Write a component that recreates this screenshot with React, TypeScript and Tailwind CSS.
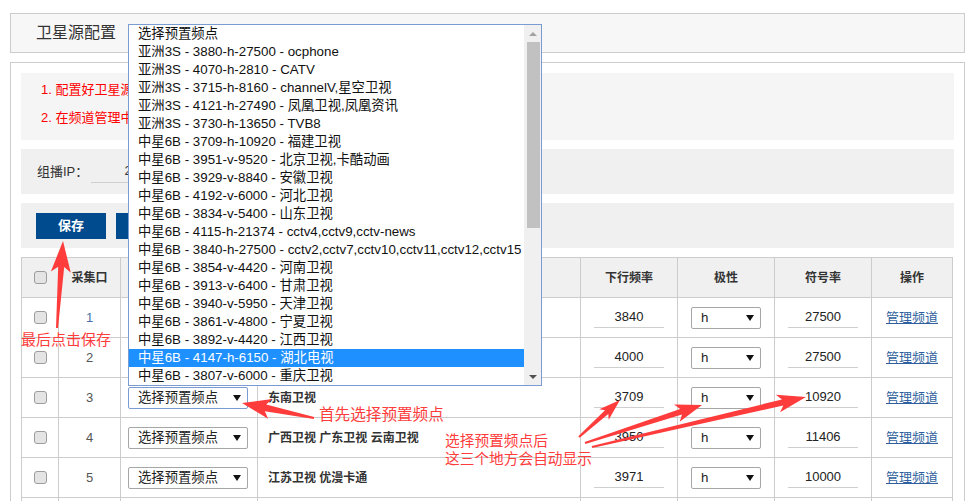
import React from "react";

// preset frequency list shown in the open select popup
const presets: string[] = [
  "选择预置频点",
  "亚洲3S - 3880-h-27500 - ocphone",
  "亚洲3S - 4070-h-2810 - CATV",
  "亚洲3S - 3715-h-8160 - channelV,星空卫视",
  "亚洲3S - 4121-h-27490 - 凤凰卫视,凤凰资讯",
  "亚洲3S - 3730-h-13650 - TVB8",
  "中星6B - 3709-h-10920 - 福建卫视",
  "中星6B - 3951-v-9520 - 北京卫视,卡酷动画",
  "中星6B - 3929-v-8840 - 安徽卫视",
  "中星6B - 4192-v-6000 - 河北卫视",
  "中星6B - 3834-v-5400 - 山东卫视",
  "中星6B - 4115-h-21374 - cctv4,cctv9,cctv-news",
  "中星6B - 3840-h-27500 - cctv2,cctv7,cctv10,cctv11,cctv12,cctv15",
  "中星6B - 3854-v-4420 - 河南卫视",
  "中星6B - 3913-v-6400 - 甘肃卫视",
  "中星6B - 3940-v-5950 - 天津卫视",
  "中星6B - 3861-v-4800 - 宁夏卫视",
  "中星6B - 3892-v-4420 - 江西卫视",
  "中星6B - 4147-h-6150 - 湖北电视",
  "中星6B - 3807-v-6000 - 重庆卫视",
];
const selectedPreset = 18;

interface Row {
  port: number;
  name: string;
  freq: string;
  pol: string;
  sym: string;
}

// rows 1-2 sit under the open popup, so their names are not shown
const rows: Row[] = [
  { port: 1, name: "", freq: "3840", pol: "h", sym: "27500" },
  { port: 2, name: "", freq: "4000", pol: "h", sym: "27500" },
  { port: 3, name: "东南卫视", freq: "3709", pol: "h", sym: "10920" },
  { port: 4, name: "广西卫视 广东卫视 云南卫视", freq: "3950", pol: "h", sym: "11406" },
  { port: 5, name: "江苏卫视 优漫卡通", freq: "3971", pol: "h", sym: "10000" },
];

const annotationRed = "#ff3c3c";

function Caret() {
  return (
    <svg width="8" height="6" viewBox="0 0 8 6" className="shrink-0">
      <polygon points="0,0 8,0 4,6" fill="#111" />
    </svg>
  );
}

function CheckBox() {
  return <div className="w-[13px] h-[13px] rounded-[3px] border border-[#9c9c9c] bg-[#e4e4e4]" />;
}

function FakeSelect({ value, width, focused }: { value: string; width: string; focused?: boolean }) {
  return (
    <div
      className={`${width} h-[22px] flex items-center justify-between pl-[9px] pr-[6px] rounded-[2px] border bg-white text-[13.33px] leading-[20px] text-[#222] ${
        focused ? "border-[#7b9bd3]" : "border-[#a6a6a6]"
      }`}
    >
      <span>{value}</span>
      <Caret />
    </div>
  );
}

function UnderlineInput({ value, width }: { value: string; width: string }) {
  return (
    <div className={`${width} h-[20px] border-b border-[#cfcfcf] text-center text-[13px] leading-[18px] text-[#222]`}>
      {value}
    </div>
  );
}

// red annotation arrow: tapered shaft with a swallow-tail head
function arrowPoints(
  x1: number, y1: number, x2: number, y2: number,
  tailW: number, shaftW: number, headL: number, headW: number
) {
  const len = Math.hypot(x2 - x1, y2 - y1);
  const ux = (x2 - x1) / len;
  const uy = (y2 - y1) / len;
  const nx = -uy;
  const ny = ux;
  const bx = x2 - ux * headL;
  const by = y2 - uy * headL;
  const back = headL * 0.2;
  const pts = [
    [x1 + (nx * tailW) / 2, y1 + (ny * tailW) / 2],
    [bx + (nx * shaftW) / 2, by + (ny * shaftW) / 2],
    [bx - ux * back + (nx * headW) / 2, by - uy * back + (ny * headW) / 2],
    [x2, y2],
    [bx - ux * back - (nx * headW) / 2, by - uy * back - (ny * headW) / 2],
    [bx - (nx * shaftW) / 2, by - (ny * shaftW) / 2],
    [x1 - (nx * tailW) / 2, y1 - (ny * tailW) / 2],
  ];
  return pts.map((p) => `${p[0].toFixed(1)},${p[1].toFixed(1)}`).join(" ");
}

const arrows: number[][] = [
  [57, 328, 63, 241, 2, 6, 26, 20],
  [314, 418, 242, 403, 2, 7, 24, 20],
  [579, 437, 620, 400, 2, 5, 18, 14],
  [585, 443, 702, 405, 2, 6, 22, 18],
  [592, 447, 806, 397, 2, 6, 24, 18],
];

const cols = ["w-[37px]", "w-[62px]", "w-[137px]", "w-[323px]", "w-[97px]", "w-[97px]", "w-[97px]", "w-[81px]"];

export default function App() {
  return (
    <div className="relative w-[966px] h-[501px] overflow-hidden bg-white pt-[13px] font-['Liberation_Sans','Noto_Sans_CJK_SC',sans-serif] text-[#333]">
      {/* title bar */}
      <div className="ml-[10px] w-[955px] h-[40px] border border-[#cccccc] bg-[#f7f7f7] flex items-center pl-[25px]">
        <span className="text-[16px] leading-[20px] text-[#333]">卫星源配置</span>
      </div>

      {/* main panel */}
      <div className="ml-[10px] mt-[9px] w-[955px] border border-[#cccccc] p-[10px] pb-[40px]">
        {/* notes */}
        <div className="h-[67px] bg-[#f5f5f5] pl-[20px] pt-[3px] text-[13px] leading-[28px] text-[#ff0000]">
          <div>1. 配置好卫星源的各项参数</div>
          <div>2. 在频道管理中选择需要的频道</div>
        </div>

        {/* multicast ip */}
        <div className="mt-[9px] h-[45px] bg-[#f0f0f0] flex items-center pl-[16px]">
          <span className="text-[13px] leading-[20px] text-[#333] w-[54px]">组播IP：</span>
          <div className="w-[150px] h-[22px] border-b border-[#cfcfcf] text-center text-[13px] leading-[20px] text-[#333]">
            239.255.10.10
          </div>
        </div>

        {/* buttons */}
        <div className="mt-[9px] h-[45px] bg-[#f0f0f0] flex items-center gap-[10px] pl-[15px]">
          <button className="w-[70px] h-[26px] bg-[#004a8e] text-white text-[13px] font-bold leading-[20px]">保存</button>
          <button className="w-[70px] h-[26px] bg-[#004a8e] text-white text-[13px] font-bold leading-[20px]">删除</button>
        </div>

        {/* table */}
        <div className="mt-[9px] w-[932px] border-l border-t border-[#cccccc]">
          <div className="flex h-[40px] bg-[#f0f0f0] border-b border-[#cccccc] text-[12px] font-bold leading-[18px] text-[#333]">
            <div className={`${cols[0]} border-r border-[#cccccc] flex items-center justify-center`}>
              <CheckBox />
            </div>
            <div className={`${cols[1]} border-r border-[#cccccc] flex items-center justify-center`}>采集口</div>
            <div className={`${cols[2]} border-r border-[#cccccc] flex items-center justify-center`}>预置频点</div>
            <div className={`${cols[3]} border-r border-[#cccccc] flex items-center pl-[10px]`}>频道名称</div>
            <div className={`${cols[4]} border-r border-[#cccccc] flex items-center justify-center`}>下行频率</div>
            <div className={`${cols[5]} border-r border-[#cccccc] flex items-center justify-center`}>极性</div>
            <div className={`${cols[6]} border-r border-[#cccccc] flex items-center justify-center`}>符号率</div>
            <div className={`${cols[7]} border-r border-[#cccccc] flex items-center justify-center`}>操作</div>
          </div>
          {rows.map((r) => (
            <div key={r.port} className="flex h-[40px] border-b border-[#cccccc]">
              <div className={`${cols[0]} border-r border-[#cccccc] flex items-center justify-center`}>
                <CheckBox />
              </div>
              <div className={`${cols[1]} border-r border-[#cccccc] flex items-center justify-center text-[13px] leading-[18px] ${r.port === 1 ? "text-[#4a72a8]" : "text-[#555]"}`}>
                {r.port}
              </div>
              <div className={`${cols[2]} border-r border-[#cccccc] flex items-center pl-[7px]`}>
                <FakeSelect value="选择预置频点" width="w-[120px]" focused={r.port === 3} />
              </div>
              <div className={`${cols[3]} border-r border-[#cccccc] flex items-center pl-[10px] text-[12px] font-bold leading-[18px] text-[#333]`}>
                {r.name}
              </div>
              <div className={`${cols[4]} border-r border-[#cccccc] flex items-center justify-center`}>
                <UnderlineInput value={r.freq} width="w-[70px]" />
              </div>
              <div className={`${cols[5]} border-r border-[#cccccc] flex items-center justify-center`}>
                <FakeSelect value={r.pol} width="w-[70px]" />
              </div>
              <div className={`${cols[6]} border-r border-[#cccccc] flex items-center justify-center`}>
                <UnderlineInput value={r.sym} width="w-[70px]" />
              </div>
              <div className={`${cols[7]} border-r border-[#cccccc] flex items-center justify-center`}>
                <a href="#" className="text-[13px] leading-[18px] text-[#2f5f9e] underline">管理频道</a>
              </div>
            </div>
          ))}
          {/* next row, only its top edge is in view */}
          <div className="flex h-[40px]">
            {cols.map((c) => (
              <div key={c + Math.random()} className={`${c} border-r border-[#cccccc]`} />
            ))}
          </div>
        </div>
      </div>

      {/* open select popup */}
      <div className="absolute left-[128px] top-[24px] w-[414px] h-[362px] z-10 border border-[#7b9bd3] bg-white flex">
        <div className="flex-1">
          {presets.map((p, i) => (
            <div
              key={p}
              className={`h-[18px] pl-[9px] text-[13.33px] leading-[18px] whitespace-nowrap ${
                i === selectedPreset ? "bg-[#1e90ff] text-white" : "text-[#111]"
              }`}
            >
              {p}
            </div>
          ))}
        </div>
        <div className="w-[17px] bg-[#f0f0f0] flex flex-col items-center">
          <div className="h-[17px] flex items-center justify-center">
            <svg width="8" height="4" viewBox="0 0 8 4">
              <polygon points="0,4 8,4 4,0" fill="#a3a3a3" />
            </svg>
          </div>
          <div className="ml-[1px] w-[13px] h-[186px] bg-[#c1c1c1]" />
          <div className="flex-1" />
          <div className="h-[17px] flex items-center justify-center">
            <svg width="8" height="4" viewBox="0 0 8 4">
              <polygon points="0,0 8,0 4,4" fill="#505050" />
            </svg>
          </div>
        </div>
      </div>

      {/* annotation arrows */}
      <svg className="absolute left-0 top-0 z-20 pointer-events-none" width="966" height="501" viewBox="0 0 966 501">
        {arrows.map((a, i) => (
          <polygon key={i} points={arrowPoints(a[0], a[1], a[2], a[3], a[4], a[5], a[6], a[7])} fill={annotationRed} />
        ))}
      </svg>

      {/* annotation texts */}
      <div className="absolute left-[21px] top-[330px] z-20 text-[15px] leading-[20px] text-[#ff3c3c] whitespace-nowrap">
        最后点击保存
      </div>
      <div className="absolute left-[319px] top-[405px] z-20 text-[15.6px] leading-[20px] text-[#ff3c3c] whitespace-nowrap">
        首先选择预置频点
      </div>
      <div className="absolute left-[445px] top-[432px] z-20 text-[14.7px] leading-[18px] text-[#ff3c3c] whitespace-nowrap">
        <div>选择预置频点后</div>
        <div>这三个地方会自动显示</div>
      </div>
    </div>
  );
}
